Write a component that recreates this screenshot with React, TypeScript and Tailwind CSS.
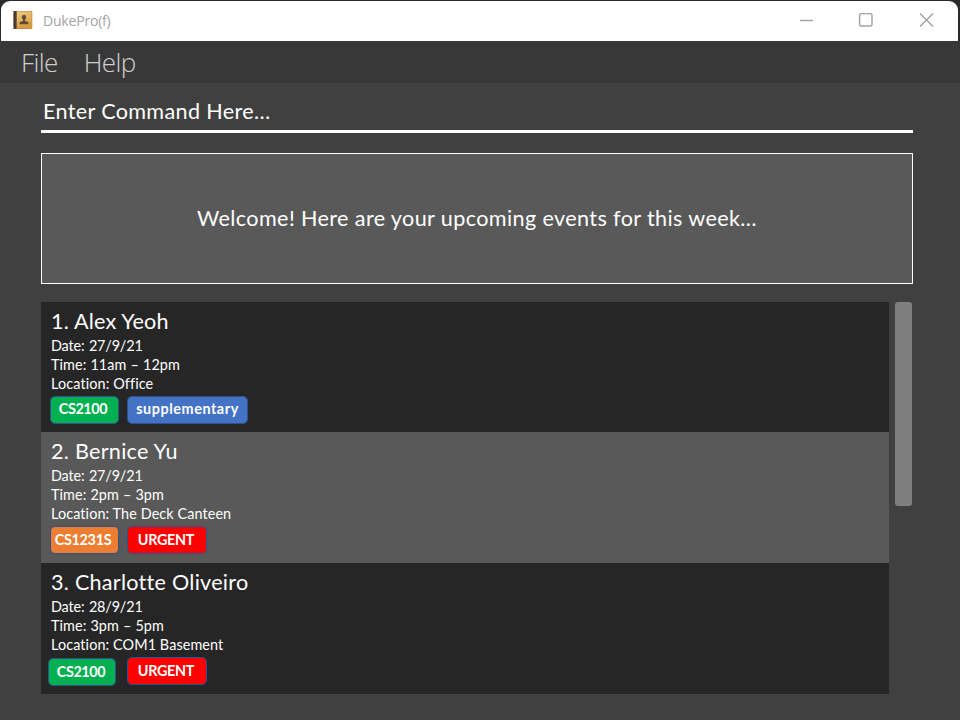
type Tag = { label: string; box: string; text: string };
type Event = {
  title: string;
  titleClass: string;
  lines: { text: string; className: string }[];
  row: string;
  tagRow: string;
  tags: Tag[];
};

const events: Event[] = [
  {
    title: "1. Alex Yeoh",
    titleClass: "tracking-[0.18px]",
    lines: [
      { text: "Date: 27/9/21", className: "tracking-[-0.15px] [word-spacing:1px]" },
      { text: "Time: 11am – 12pm", className: "tracking-[0.08px] [word-spacing:0.3px]" },
      { text: "Location: Office", className: "tracking-[0.12px]" },
    ],
    row: "h-[130px] bg-[#262626]",
    tagRow: "pl-[9px]",
    tags: [
      { label: "CS2100", box: "mr-2 w-[69px] bg-[#00b050] pb-[2px] pr-[3px]", text: "tracking-[-0.4px]" },
      { label: "supplementary", box: "w-[121px] bg-[#4472c4] pb-[2px]", text: "tracking-[0.55px]" },
    ],
  },
  {
    title: "2. Bernice Yu",
    titleClass: "tracking-[0.27px]",
    lines: [
      { text: "Date: 27/9/21", className: "tracking-[-0.15px] [word-spacing:1px]" },
      { text: "Time: 2pm – 3pm", className: "tracking-[0.08px] [word-spacing:0.3px]" },
      { text: "Location: The Deck Canteen", className: "tracking-[0.1px]" },
    ],
    row: "h-[131px] bg-[#595959]",
    tagRow: "pl-[9px]",
    tags: [
      { label: "CS1231S", box: "mr-2 w-[69px] bg-[#ed7d31] pr-[3px]", text: "tracking-[-0.3px]" },
      { label: "URGENT", box: "w-[80px] bg-[#ff0000] pr-[2px]", text: "tracking-[-0.3px]" },
    ],
  },
  {
    title: "3. Charlotte Oliveiro",
    titleClass: "tracking-[0.25px]",
    lines: [
      { text: "Date: 28/9/21", className: "tracking-[-0.15px] [word-spacing:1px]" },
      { text: "Time: 3pm – 5pm", className: "tracking-[0.08px] [word-spacing:0.3px]" },
      { text: "Location: COM1 Basement", className: "tracking-[0.1px]" },
    ],
    row: "h-[131px] bg-[#262626]",
    tagRow: "pl-[7px]",
    tags: [
      { label: "CS2100", box: "mt-px mr-[11px] w-[68px] bg-[#00b050] pr-[2px]", text: "tracking-[-0.4px]" },
      { label: "URGENT", box: "w-[80px] bg-[#ff0000] pr-[2px]", text: "tracking-[-0.3px]" },
    ],
  },
];

function AppIcon() {
  return (
    <svg width="20" height="20" viewBox="0 0 20 20" className="shrink-0">
      <defs>
        <linearGradient id="cover" x1="0" y1="0" x2="0.3" y2="1">
          <stop offset="0" stopColor="#efcb83" />
          <stop offset="1" stopColor="#d89b3f" />
        </linearGradient>
      </defs>
      <rect x="0.5" y="1" width="18.8" height="18" rx="1" fill="#c18b43" />
      <rect x="4" y="1.6" width="14.6" height="16.4" fill="url(#cover)" />
      <rect x="0.5" y="1" width="3" height="18" rx="0.8" fill="#4b3a30" />
      <ellipse cx="11" cy="7.2" rx="2.1" ry="2.5" fill="#5b4a35" />
      <path d="M10 9h2v2l3.4 1.2v2H6.6v-2L10 11z" fill="#5b4a35" />
    </svg>
  );
}

function TitleBar() {
  return (
    <div className="h-[41px] bg-[#2a2a2a] pt-px pr-[2px] pl-px">
      <header className="flex h-10 items-center rounded-t-[9px] bg-white pb-[2px] pl-[12px]">
        <AppIcon />
        <span className="ml-[10px] pt-px font-['Open_Sans'] text-[14px] tracking-[-0.2px] text-[#a3a3a3]">DukePro(f)</span>
        <svg className="mr-[23px] ml-auto" width="136" height="18" viewBox="0 0 136 18" fill="none" stroke="#a0a0a0" strokeWidth="1.4">
          <path d="M1 9.5h13" />
          <rect x="60.6" y="2.6" width="12.4" height="12.4" rx="1.4" />
          <path d="M121 2.4l13 13M134 2.4l-13 13" />
        </svg>
      </header>
    </div>
  );
}

function EventRow({ event }: { event: Event }) {
  return (
    <li className={`${event.row} pt-[6px]`}>
      <h2 className="mb-px pl-[10px] text-[21.6px] leading-[27px] whitespace-nowrap">
        <span className={event.titleClass}>{event.title}</span>
      </h2>
      {event.lines.map((line) => (
        <p key={line.text} className="pl-[10px] text-[14.4px] leading-[19px] whitespace-nowrap">
          <span className={line.className}>{line.text}</span>
        </p>
      ))}
      <div className={`mt-[3px] flex items-start ${event.tagRow}`}>
        {event.tags.map((tag) => (
          <span
            key={tag.label}
            className={`flex h-7 items-center justify-center rounded-[5px] border border-[#2f528f] text-[14.4px] font-bold whitespace-nowrap ${tag.box}`}
          >
            <span className={tag.text}>{tag.label}</span>
          </span>
        ))}
      </div>
    </li>
  );
}

export default function App() {
  return (
    <div className="flex h-[720px] w-[960px] flex-col overflow-hidden bg-[#404040] font-['Lato',sans-serif] text-white antialiased">
      <TitleBar />
      <nav className="flex h-[42px] items-center gap-[26px] bg-[#383838] pt-px pl-[21px] font-['Open_Sans'] text-[26px] font-light tracking-[-0.6px] text-[#d0d0d0]">
        <span>File</span>
        <span>Help</span>
      </nav>
      <main className="flex flex-col pr-[47px] pl-[41px]">
        <div className="flex h-[50px] items-center border-b-[3px] border-white pt-[9px] pl-[2px] text-[21.6px] whitespace-nowrap">
          <span className="tracking-[0.34px]">Enter Command Here…</span>
        </div>
        <section className="mt-5 flex h-[131px] items-center justify-center border border-white bg-[#595959] text-[21.6px] whitespace-nowrap">
          <span className="tracking-[0.38px]">Welcome! Here are your upcoming events for this week…</span>
        </section>
        <div className="mt-[18px] flex items-start gap-[6px]">
          <ul className="w-[848px]">
            {events.map((event) => (
              <EventRow key={event.title} event={event} />
            ))}
          </ul>
          <div className="h-[204px] w-[17px] rounded-[3px] bg-[#7f7f7f]" />
        </div>
      </main>
    </div>
  );
}
